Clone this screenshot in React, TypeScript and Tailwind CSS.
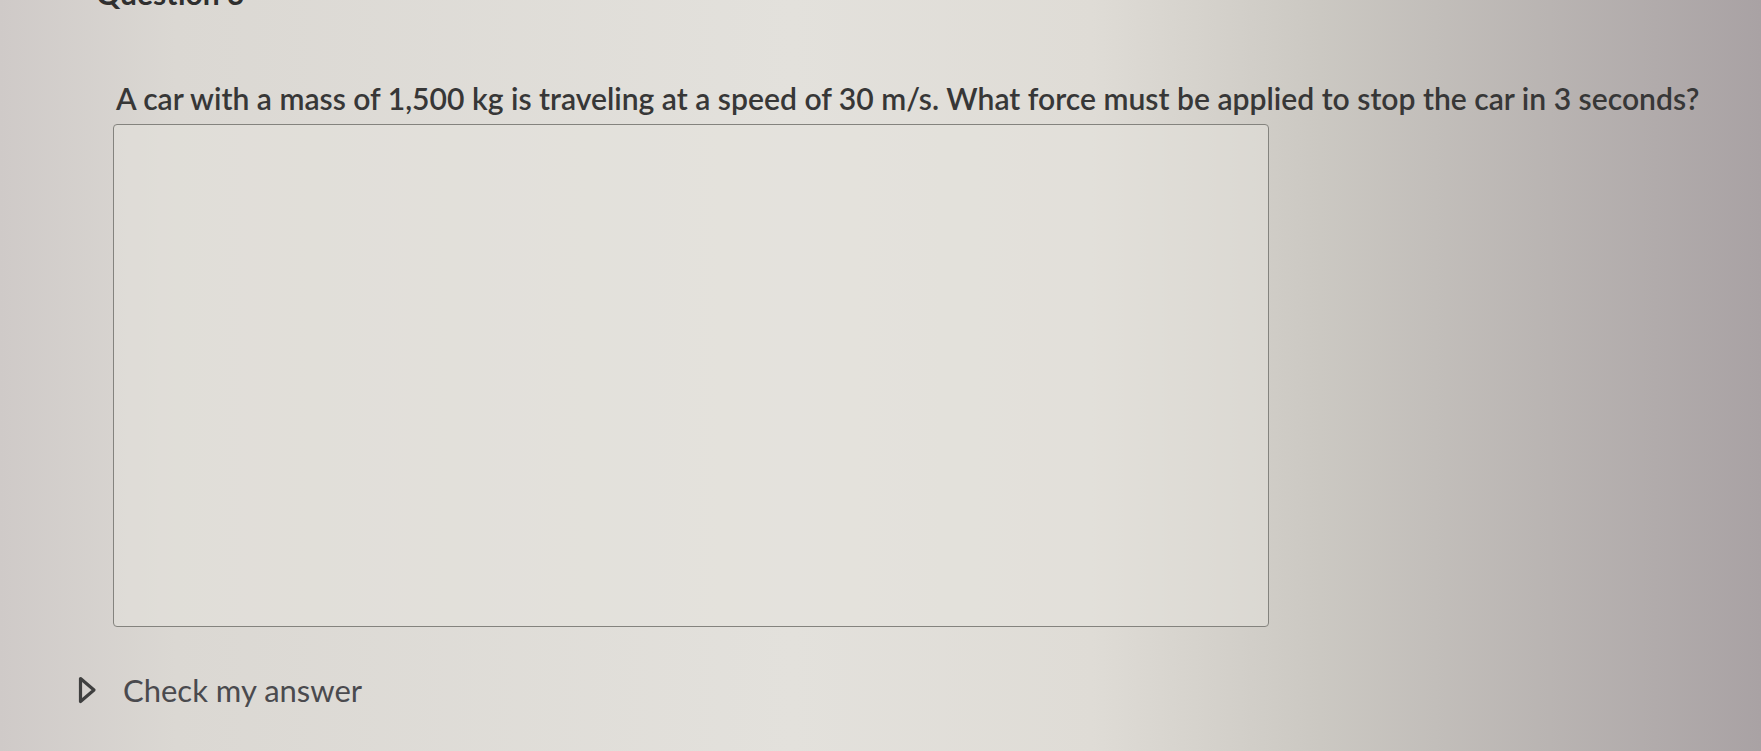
import React from 'react';

const App: React.FC = () => {
  return (
    <div
      className="w-[1761px] h-[751px] overflow-hidden bg-[linear-gradient(90deg,#cfcac8_0%,#dbd8d3_10%,#e3e1dc_45%,#dfdcd6_62%,#cbc8c2_75%,#b9b4b2_88%,#a9a2a4_100%)] text-[#3b3b3b]"
      style={{ fontFamily: 'Lato, "Open Sans", sans-serif' }}
    >
      <div className="pl-[116px]">
        {/* Question heading, mostly scrolled out of view */}
        <h2 className="-mt-[22px] -ml-[20px] h-[30px] text-[30px] leading-[30px] font-bold text-[#2f2f2f]">
          Question 3
        </h2>

        {/* Prompt */}
        <p className="mt-[72px] text-[30.1px] leading-[36px] font-semibold text-[#373737]">
          A car with a mass of 1,500 kg is traveling at a speed of 30 m/s. What force must be applied to stop the car in 3 seconds?
        </p>

        {/* Answer box */}
        <div className="mt-[8px] -ml-[3px] w-[1156px] h-[503px] rounded-[4px] border-[1.5px] border-[#84837e] bg-[#e5e3dd]/50" />

        {/* Check answer */}
        <div className="mt-[48px] -ml-[39px] flex items-center gap-[26px]">
          <svg width="20" height="30" viewBox="0 0 20 30" className="shrink-0">
            <path d="M3.5 3.5 L17 15 L3.5 26.5 Z" fill="none" stroke="#3f3f3f" strokeWidth="3.2" strokeLinejoin="round" />
          </svg>
          <span className="text-[31px] leading-[30px] text-[#4a4a4e]">Check my answer</span>
        </div>
      </div>
    </div>
  );
};

export default App;
